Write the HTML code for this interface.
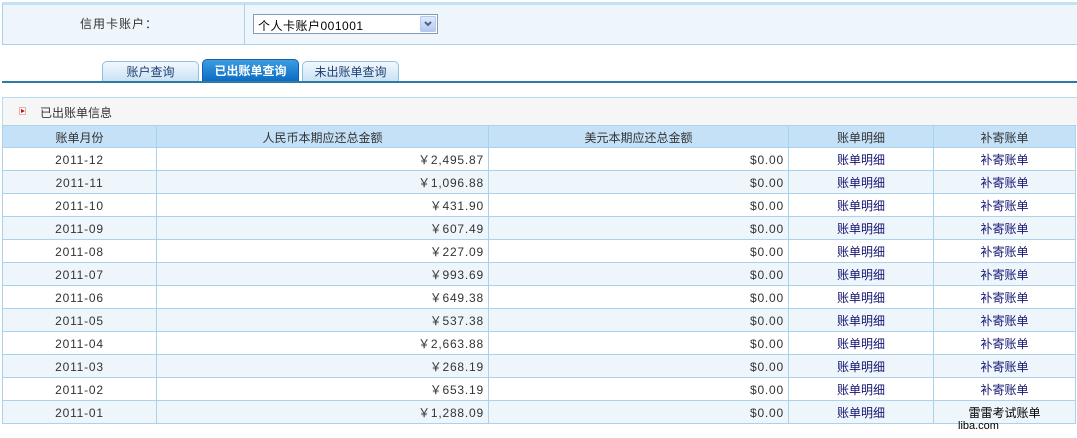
<!DOCTYPE html>
<html><head><meta charset="utf-8"><style>
*{margin:0;padding:0;box-sizing:border-box}
body{width:1077px;height:438px;background:#fff;font:12px "Liberation Sans","Noto Sans CJK SC",sans-serif;color:#333;position:relative;overflow:hidden}
.a{position:absolute}
.topbox{left:2px;top:2px;width:1080px;height:43px;border:1px solid #a9d3ec;border-top:3px solid #c4e2f5;background:#eef6fc}
.lbl{left:2px;top:4px;width:243px;height:40px;border-right:1px solid #a9d3ec}
.lbl span{position:absolute;right:86px;top:11px;color:#333;letter-spacing:1px}
.sel{left:253px;top:14px;width:185px;height:20px;border:1px solid #7f9db9;background:#fff}
.sel span{position:absolute;left:4px;top:2px;color:#000;font-size:12px;letter-spacing:0.5px}
.arr{position:absolute;right:1px;top:1px;width:16px;height:16px;background:linear-gradient(#dfe9fb,#b7c9ef);border:1px solid #b5c7ee;border-radius:2px}
.tab{top:61px;height:20px;width:97px;border:1px solid #8fc0e0;border-bottom:none;border-radius:5px 5px 0 0;background:linear-gradient(#f2f8fd,#c9e2f5);text-align:center;line-height:20px;color:#1f3f70;font-size:12px}
.tab.on{top:59px;height:22px;line-height:22px;background:linear-gradient(#3d9ce0,#0b6cc4);color:#fff;font-weight:bold;border-color:#0a62b0}
.line{left:2px;top:81px;width:1080px;height:2px;background:#2f7aa6}
.sec{left:2px;top:97px;width:1080px;height:29px;border:1px solid #b6dcef;border-bottom:none;background:#f6f6f6}
.sec b{position:absolute;left:16px;top:9px;width:7px;height:8px;border:1px solid #e6b0b0;background:#fff}
.sec b:after{content:"";position:absolute;left:1px;top:1px;border-left:4px solid #c01010;border-top:2.5px solid transparent;border-bottom:2.5px solid transparent}
.sec span{position:absolute;left:37px;top:6px}
table{position:absolute;left:2px;top:125px;border-collapse:collapse;width:1074px}
td{border:1px solid #a9d3ec;height:23px;padding:0 4px;white-space:nowrap;padding-top:1px}
tr.h td{height:22px;background:#c5e1f7;text-align:center;color:#333}
tr:nth-child(odd):not(.h) td{background:#eef6fc}
.c{text-align:center;letter-spacing:0.8px}.r{text-align:right;letter-spacing:0.8px}
.l{color:#141470;text-align:center}
</style></head><body>
<div class="a topbox"></div>
<div class="a lbl"><span>信用卡账户：</span></div>
<div class="a sel"><span>个人卡账户001001</span><div class="arr"><svg width="14" height="14" viewBox="0 0 14 14"><path d="M4 5l3 3 3-3" stroke="#4d6185" stroke-width="2" fill="none"/></svg></div></div>
<div class="a tab" style="left:102px">账户查询</div>
<div class="a tab on" style="left:202px">已出账单查询</div>
<div class="a tab" style="left:302px">未出账单查询</div>
<div class="a line"></div>
<div class="a sec"><b></b><span>已出账单信息</span></div>
<table>
<tr class="h"><td style="width:154px">账单月份</td><td style="width:332px">人民币本期应还总金额</td><td style="width:300px">美元本期应还总金额</td><td style="width:145px">账单明细</td><td>补寄账单</td></tr>
<tr><td class="c">2011-12</td><td class="r">￥2,495.87</td><td class="r">$0.00</td><td class="l">账单明细</td><td class="l">补寄账单</td></tr>
<tr><td class="c">2011-11</td><td class="r">￥1,096.88</td><td class="r">$0.00</td><td class="l">账单明细</td><td class="l">补寄账单</td></tr>
<tr><td class="c">2011-10</td><td class="r">￥431.90</td><td class="r">$0.00</td><td class="l">账单明细</td><td class="l">补寄账单</td></tr>
<tr><td class="c">2011-09</td><td class="r">￥607.49</td><td class="r">$0.00</td><td class="l">账单明细</td><td class="l">补寄账单</td></tr>
<tr><td class="c">2011-08</td><td class="r">￥227.09</td><td class="r">$0.00</td><td class="l">账单明细</td><td class="l">补寄账单</td></tr>
<tr><td class="c">2011-07</td><td class="r">￥993.69</td><td class="r">$0.00</td><td class="l">账单明细</td><td class="l">补寄账单</td></tr>
<tr><td class="c">2011-06</td><td class="r">￥649.38</td><td class="r">$0.00</td><td class="l">账单明细</td><td class="l">补寄账单</td></tr>
<tr><td class="c">2011-05</td><td class="r">￥537.38</td><td class="r">$0.00</td><td class="l">账单明细</td><td class="l">补寄账单</td></tr>
<tr><td class="c">2011-04</td><td class="r">￥2,663.88</td><td class="r">$0.00</td><td class="l">账单明细</td><td class="l">补寄账单</td></tr>
<tr><td class="c">2011-03</td><td class="r">￥268.19</td><td class="r">$0.00</td><td class="l">账单明细</td><td class="l">补寄账单</td></tr>
<tr><td class="c">2011-02</td><td class="r">￥653.19</td><td class="r">$0.00</td><td class="l">账单明细</td><td class="l">补寄账单</td></tr>
<tr><td class="c">2011-01</td><td class="r">￥1,288.09</td><td class="r">$0.00</td><td class="l">账单明细</td><td class="l" style="color:#000">雷雷考试账单</td></tr>
</table>
<div class="a" style="left:958px;top:420px;font-size:11px;color:#000">liba.com</div>
</body></html>
